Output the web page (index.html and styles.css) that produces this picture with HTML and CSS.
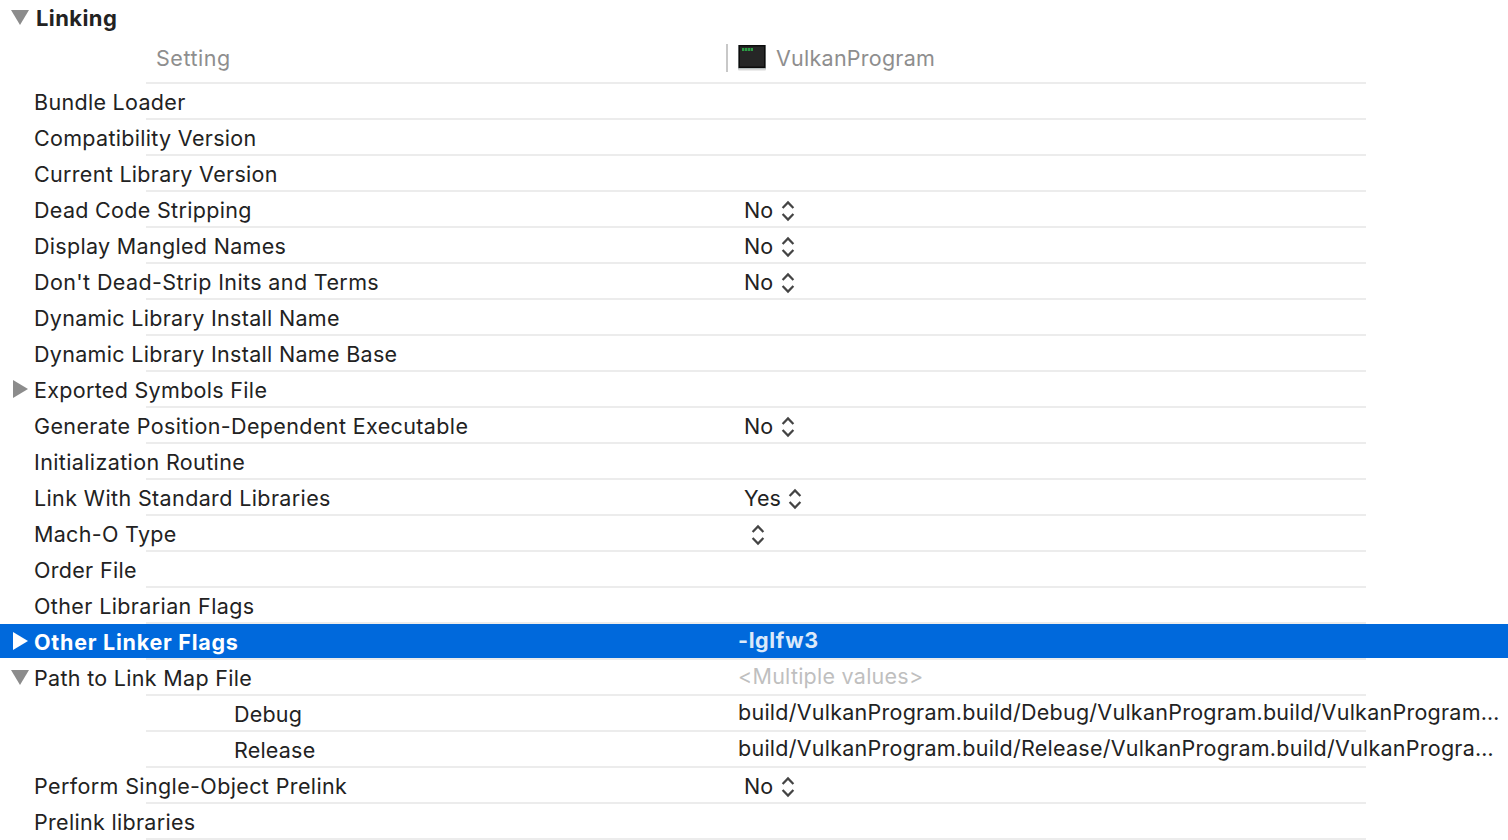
FILE: index.html
```html
<!DOCTYPE html>
<html lang="en">
<head>
<meta charset="utf-8">
<title>Build Settings – Linking</title>
<link rel="stylesheet" href="styles.css">
</head>
<body>
<svg class="defs" width="0" height="0" aria-hidden="true">
  <symbol id="updown" viewBox="0 0 14 22"><path d="M1.6 8 7 2.4 12.4 8M1.6 14 7 19.6 12.4 14" fill="none" stroke="#444" stroke-width="2.2"/></symbol>
  <symbol id="open" viewBox="0 0 18 18"><path d="M0 2h18L9 17z" fill="currentColor"/></symbol>
  <symbol id="closed" viewBox="0 0 18 18"><path d="M2 0v18L17 9z" fill="currentColor"/></symbol>
</svg>
<main class="settings">
  <header class="group"><svg class="tri"><use href="#open"/></svg><h1 class="title">Linking</h1></header>
  <div class="columns">
    <span class="col-setting">Setting</span>
    <div class="col-target">
      <svg class="app" width="32" height="30" viewBox="0 0 32 30">
        <rect x="2" y="3" width="28" height="24.5" rx="1" fill="#000" opacity=".15"/>
        <rect x="2" y="2" width="28" height="24" fill="#b4bcbc"/>
        <rect x="2.5" y="2" width="27" height="23" fill="#0c0c0c"/>
        <rect x="4" y="3.5" width="24" height="20" fill="#262626"/>
        <path d="M6 6.5h11" stroke="#2c9e45" stroke-width="3" stroke-dasharray="2.3 .6"/>
      </svg>
      <span class="target">VulkanProgram</span>
    </div>
  </div>
  <div class="row"><span class="label">Bundle Loader</span></div>
  <div class="row"><span class="label">Compatibility Version</span></div>
  <div class="row"><span class="label">Current Library Version</span></div>
  <div class="row"><span class="label">Dead Code Stripping</span><span class="popup">No<svg class="arrows"><use href="#updown"/></svg></span></div>
  <div class="row"><span class="label">Display Mangled Names</span><span class="popup">No<svg class="arrows"><use href="#updown"/></svg></span></div>
  <div class="row"><span class="label wide">Don't Dead-Strip Inits and Terms</span><span class="popup">No<svg class="arrows"><use href="#updown"/></svg></span></div>
  <div class="row"><span class="label">Dynamic Library Install Name</span></div>
  <div class="row"><span class="label">Dynamic Library Install Name Base</span></div>
  <div class="row"><svg class="tri"><use href="#closed"/></svg><span class="label">Exported Symbols File</span></div>
  <div class="row"><span class="label wide">Generate Position-Dependent Executable</span><span class="popup">No<svg class="arrows"><use href="#updown"/></svg></span></div>
  <div class="row"><span class="label wide">Initialization Routine</span></div>
  <div class="row"><span class="label wide">Link With Standard Libraries</span><span class="popup snug">Yes<svg class="arrows"><use href="#updown"/></svg></span></div>
  <div class="row"><span class="label">Mach-O Type</span><span class="popup snug"><svg class="arrows"><use href="#updown"/></svg></span></div>
  <div class="row"><span class="label">Order File</span></div>
  <div class="row"><span class="label wide">Other Librarian Flags</span></div>
  <div class="row selected"><svg class="tri"><use href="#closed"/></svg><span class="label">Other Linker Flags</span><span class="value">-lglfw3</span></div>
  <div class="row"><svg class="tri"><use href="#open"/></svg><span class="label">Path to Link Map File</span><span class="value multiple">&lt;Multiple values&gt;</span></div>
  <div class="row"><span class="label config">Debug</span><span class="value path">build/VulkanProgram.build/Debug/VulkanProgram.build/VulkanProgram…</span></div>
  <div class="row"><span class="label config">Release</span><span class="value path">build/VulkanProgram.build/Release/VulkanProgram.build/VulkanProgra…</span></div>
  <div class="row"><span class="label wide">Perform Single-Object Prelink</span><span class="popup">No<svg class="arrows"><use href="#updown"/></svg></span></div>
  <div class="row"><span class="label">Prelink libraries</span></div>
</main>
</body>
</html>
```
FILE: styles.css
```css
* { box-sizing: border-box; }
body {
  margin: 0;
  background: #fff;
  color: #222;
  font: 21.5px/36px Inter, "Liberation Sans", sans-serif;
  overflow: hidden;
}
.defs { display: block; height: 0; }
.settings { height: 840px; overflow: hidden; }
.group { display: flex; height: 36px; }
.title { margin: 0 0 0 7px; font-size: 22px; font-weight: 700; line-height: 36px; letter-spacing: 0.4px; }
.tri { width: 18px; height: 18px; margin: 8px 0 0 11px; color: #8c8c8c; flex: none; }
.columns {
  display: grid;
  grid-template-columns: 726px 1fr;
  height: 48px;
  color: #8e8e8e;
  background: linear-gradient(#ececec, #ececec) no-repeat 146px 100% / 1220px 2px;
}
.col-setting { padding: 4px 0 0 156px; letter-spacing: 0.55px; }
.col-target { display: flex; height: 28px; margin-top: 8px; border-left: 2px solid #c8c8c8; padding-left: 8px; }
.app { flex: none; margin-top: -1px; }
.target { margin: -4px 0 0 8px; letter-spacing: 0.25px; }
.row {
  display: grid;
  grid-template-columns: 34px 704px 1fr;
  height: 36px;
  white-space: nowrap;
  background: linear-gradient(#ececec, #ececec) no-repeat 146px 100% / 1220px 2px;
}
.label { grid-column: 2; grid-row: 1; letter-spacing: 0.31px; }
.wide { letter-spacing: 0.38px; }
.row .tri { grid-column: 1; grid-row: 1; }
.config { padding-left: 200px; letter-spacing: 0.2px; }
.popup, .value { grid-column: 3; grid-row: 1; }
.popup { display: flex; padding-left: 6px; }
.arrows { width: 14px; height: 22px; margin: 8px 0 0 8px; }
.snug .arrows { margin-left: 7px; }
.value { margin-top: -2px; letter-spacing: 0.25px; }
.multiple { color: #bfbfbf; }
.selected {
  color: #fff;
  font-weight: 700;
  background:
    linear-gradient(#ececec, #ececec) no-repeat 146px 100% / 1220px 2px,
    linear-gradient(#0069dc, #0069dc) no-repeat 0 0 / 100% 34px;
}
.selected .tri { color: #fff; }
.selected .label { letter-spacing: 0.75px; }
.selected .value { color: #dce9fa; letter-spacing: 0.6px; }
```
